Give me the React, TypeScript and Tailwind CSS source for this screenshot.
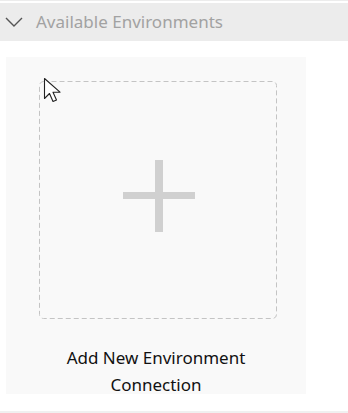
import React from 'react';

function Chevron() {
  return (
    <svg width="18" height="10" viewBox="0 0 18 10" fill="none">
      <path d="M1 1 L9 9 L17 1" stroke="#555" strokeWidth="1.4" />
    </svg>
  );
}

function Cursor() {
  return (
    <svg width="20" height="28" viewBox="0 0 20 28" className="absolute left-[43px] top-[77px]">
      <path
        d="M1.5 1.5 L1.5 21.5 L6.5 16.5 L10 24.5 L13.5 23 L10 15.2 L17 15.2 Z"
        fill="#fff"
        stroke="#222"
        strokeWidth="1.1"
        strokeLinejoin="round"
      />
    </svg>
  );
}

export default function App() {
  return (
    <div className="relative w-[348px] h-[413px] bg-white" style={{ fontFamily: '"Noto Sans", "Open Sans", sans-serif' }}>
      <div className="h-[1px] bg-[#ececec]" />
      <div className="mt-[2px] h-[38px] bg-[#ececec] flex items-center pl-[5px] gap-[13px]">
        <Chevron />
        <span className="text-[17px] text-[#a2a2a2]">Available Environments</span>
      </div>
      <div className="ml-[6px] mt-[16px] w-[300px] h-[337px] bg-[#f9f9f9] flex flex-col pt-[24px]">
        <div className="relative ml-[33px] shrink-0 w-[238px] h-[238px] flex items-center justify-center">
          {/* dashed outline */}
          <svg width="238" height="238" className="absolute inset-0">
            <rect x="0.5" y="0.5" width="237" height="237" rx="4" fill="none" stroke="#c4c4c4" strokeDasharray="5 3" />
          </svg>
          <div className="relative w-[72px] h-[72px] ml-[2px] mb-[8px]">
            <div className="absolute left-[32px] top-0 w-[8px] h-[72px] bg-[#d0d0d0]" />
            <div className="absolute left-0 top-[32px] w-[72px] h-[7px] bg-[#d0d0d0]" />
          </div>
        </div>
        <p className="mt-[25px] self-center text-center text-[17px] leading-[27px] text-[#111] w-[220px]">
          Add New Environment Connection
        </p>
      </div>
      <div className="absolute left-0 right-0 bottom-0 h-[2px] bg-[#f0f0f0]" />
      <Cursor />
    </div>
  );
}
